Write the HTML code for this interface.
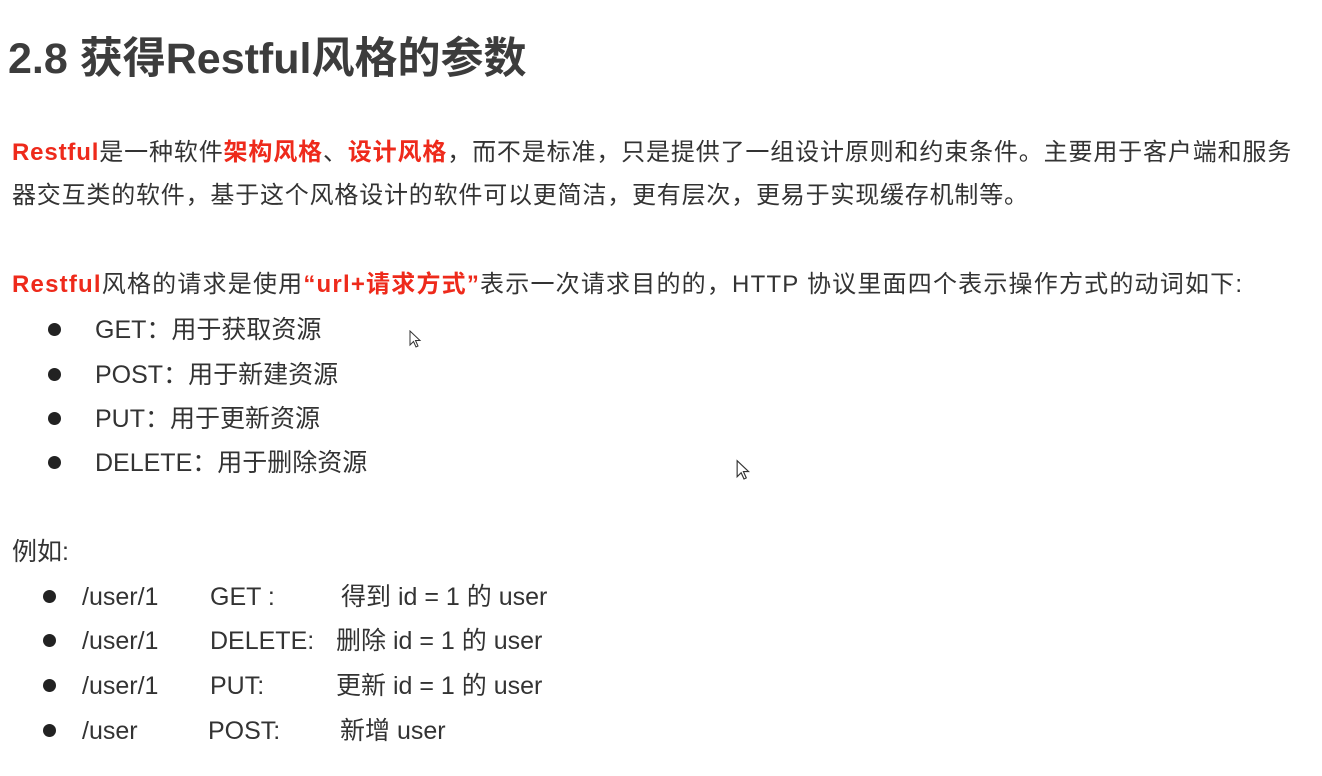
<!DOCTYPE html>
<html><head><meta charset="utf-8"><style>
html,body{margin:0;padding:0;background:#fff;width:1322px;height:776px;overflow:hidden;position:relative}
body{font-family:"Liberation Sans","Noto Sans CJK SC",sans-serif;color:#333}
.l{position:absolute;white-space:nowrap;font-size:24px;line-height:30px}
.m{font-size:25px}
.r{color:#ee2a1b;font-weight:bold}
h1{position:absolute;left:8px;top:33px;margin:0;font-size:43px;line-height:52px;color:#3c3c3c;font-weight:bold;white-space:nowrap}
.b{position:absolute;width:13px;height:13px;border-radius:50%;background:#222}
</style></head><body>
<h1>2.8 获得Restful风格的参数</h1>
<div class="l" style="left:12px;top:138px;letter-spacing:0.85px"><span class="r">Restful</span>是一种软件<span class="r">架构风格</span>、<span class="r">设计风格</span>，而不是标准，只是提供了一组设计原则和约束条件。主要用于客户端和服务</div>
<div class="l" style="left:12px;top:181px;letter-spacing:0.8px">器交互类的软件，基于这个风格设计的软件可以更简洁，更有层次，更易于实现缓存机制等。</div>
<div class="l" style="left:12px;top:270px;letter-spacing:1.2px"><span class="r">Restful</span>风格的请求是使用<span class="r">“url+请求方式”</span>表示一次请求目的的，HTTP 协议里面四个表示操作方式的动词如下:</div>
<div class="b" style="left:48px;top:323px"></div><div class="l m" style="left:95px;top:315px">GET：用于获取资源</div>
<div class="b" style="left:48px;top:368px"></div><div class="l m" style="left:95px;top:360px">POST：用于新建资源</div>
<div class="b" style="left:48px;top:412px"></div><div class="l m" style="left:95px;top:404px">PUT：用于更新资源</div>
<div class="b" style="left:48px;top:456px"></div><div class="l m" style="left:95px;top:448px">DELETE：用于删除资源</div>
<div class="l m" style="left:12px;top:537px">例如:</div>
<div class="b" style="left:43px;top:590px"></div><div class="l m" style="left:82px;top:582px">/user/1</div><div class="l m" style="left:210px;top:582px">GET :</div><div class="l m" style="left:341px;top:582px">得到 id = 1 的 user</div>
<div class="b" style="left:43px;top:634px"></div><div class="l m" style="left:82px;top:626px">/user/1</div><div class="l m" style="left:210px;top:626px">DELETE:</div><div class="l m" style="left:336px;top:626px">删除 id = 1 的 user</div>
<div class="b" style="left:43px;top:679px"></div><div class="l m" style="left:82px;top:671px">/user/1</div><div class="l m" style="left:210px;top:671px">PUT:</div><div class="l m" style="left:336px;top:671px">更新 id = 1 的 user</div>
<div class="b" style="left:43px;top:724px"></div><div class="l m" style="left:82px;top:716px">/user</div><div class="l m" style="left:208px;top:716px">POST:</div><div class="l m" style="left:340px;top:716px">新增 user</div>
<svg style="position:absolute;left:409px;top:330px" width="14" height="20" viewBox="0 0 14 20"><path d="M1 1 L1 15 L4.5 11.5 L7 17 L9 16 L6.5 10.5 L11 10.5 Z" fill="#fff" stroke="#333" stroke-width="1"/></svg>
<svg style="position:absolute;left:736px;top:459px" width="16" height="24" viewBox="0 0 14 20"><path d="M1 1 L1 15 L4.5 11.5 L7 17 L9 16 L6.5 10.5 L11 10.5 Z" fill="#fff" stroke="#333" stroke-width="1"/></svg>
</body></html>
